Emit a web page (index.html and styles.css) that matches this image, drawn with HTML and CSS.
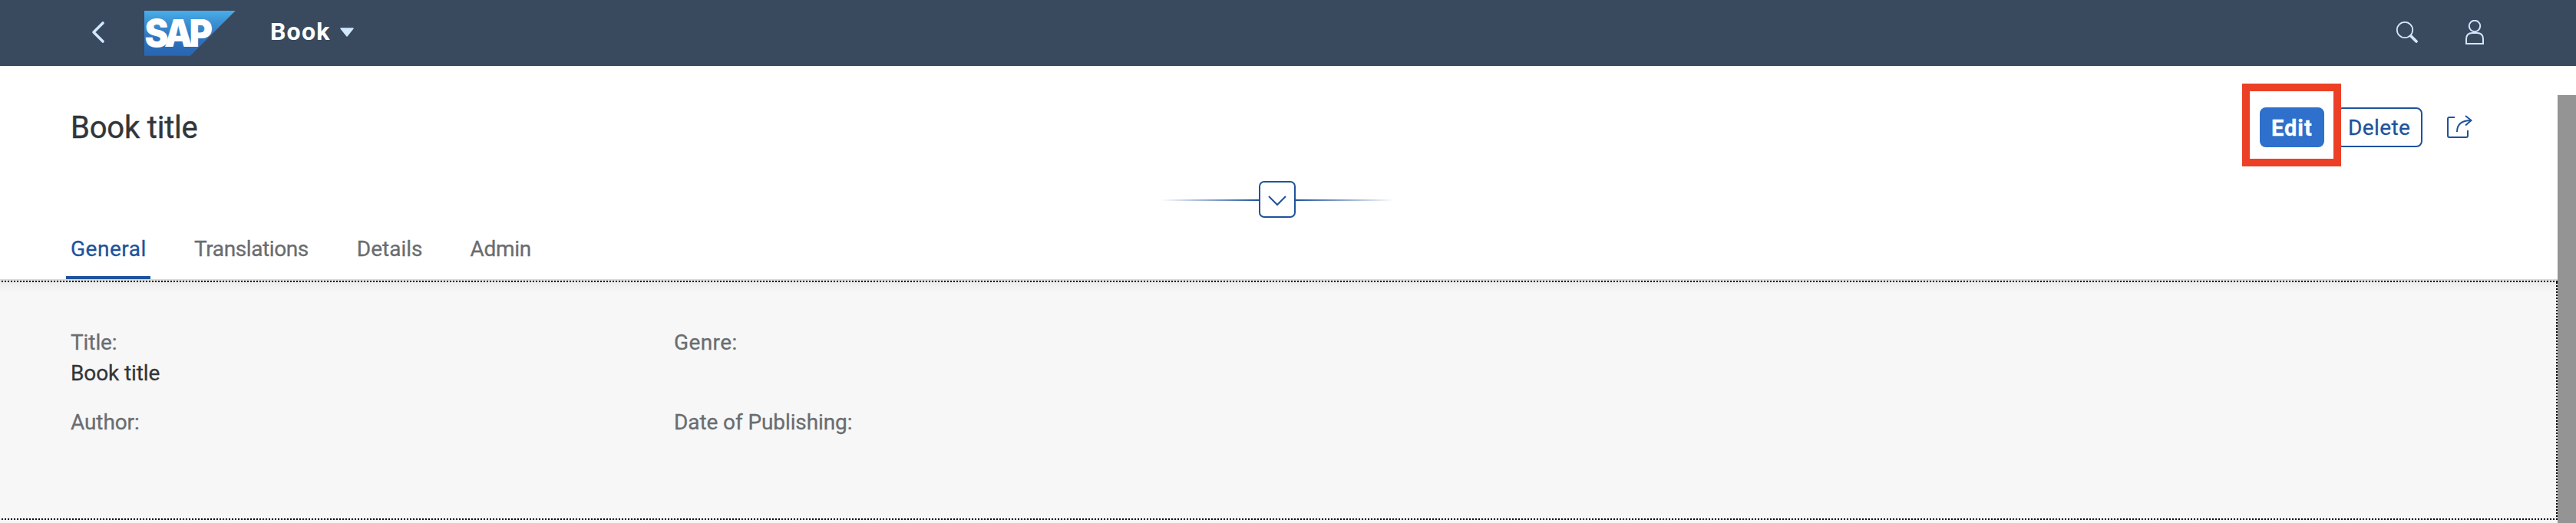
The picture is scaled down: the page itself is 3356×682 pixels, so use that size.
FILE: index.html
```html
<!DOCTYPE html>
<html lang="en">
<head>
<meta charset="utf-8">
<title>Book</title>
<link rel="stylesheet" href="styles.css">
</head>
<body>
<header class="shell">
  <svg class="back" width="18" height="30" viewBox="0 0 18 30"><path d="M15 3 3 15 15 27" fill="none" stroke="#d1e8ff" stroke-width="3.600" stroke-linecap="round" stroke-linejoin="round"/></svg>
  <svg class="logo" width="119" height="59" viewBox="0 0 119 59">
    <defs><linearGradient id="g" x1="0" y1="0" x2="0" y2="1"><stop offset="0" stop-color="#48aeea"/><stop offset=".25" stop-color="#3d92d3"/><stop offset=".6" stop-color="#2f74bf"/><stop offset="1" stop-color="#2865b0"/></linearGradient></defs>
    <path d="M0 0H118.700L60 58.700H0Z" fill="url(#g)"/>
    <text class="logo-text" transform="translate(.5 46.800) scale(.95 1)">SAP</text>
  </svg>
  <span class="app-title">Book</span>
  <svg class="caret" width="18" height="12" viewBox="0 0 18 12"><path d="M1 1H17L9 11Z" fill="#d1e8ff" stroke="#d1e8ff" stroke-width="1.500" stroke-linejoin="round"/></svg>
  <div class="tools">
    <svg width="30" height="32" viewBox="0 0 30 32" fill="none" stroke="#d1e8ff"><circle cx="12" cy="13" r="10.200" stroke-width="1.800"/><path d="M20 21 27 28" stroke-width="3.800" stroke-linecap="round"/></svg>
    <svg width="24" height="34" viewBox="0 0 24 34" fill="none" stroke="#d1e8ff" stroke-width="2"><circle cx="12" cy="8" r="7.200"/><path d="M1 31V25Q1 17 9 17H15Q23 17 23 25V31Z"/></svg>
  </div>
</header>
<div class="page">
  <main class="content">
    <div class="heading">
      <h1>Book title</h1>
      <div class="actions">
        <button class="btn primary">Edit<i class="highlight"></i></button>
        <button class="btn">Delete</button>
        <svg class="share" width="34" height="32" viewBox="0 0 34 32" fill="none" stroke="#1e539c" stroke-width="2"><path d="M11 3H4Q2 3 2 5V27Q2 29 4 29H26Q28 29 28 27V20"/><path d="M14 22C14 12 20 7 32 7M25 1 32.500 7 25 13.500"/></svg>
      </div>
    </div>
    <div class="expander"><i class="line left"></i><button class="expand"><svg width="24" height="14" viewBox="0 0 24 14"><path d="M1 1 12 12 23 1" fill="none" stroke="#1e539c" stroke-width="2"/></svg></button><i class="line right"></i></div>
    <nav class="tabs">
      <a class="active">General</a><a class="t-trans">Translations</a><a>Details</a><a class="t-admin">Admin</a>
    </nav>
    <section class="section">
      <div class="form">
        <div class="field"><label>Title:</label><p>Book title</p></div>
        <div class="field"><label class="t-genre">Genre:</label></div>
        <div class="field"><label>Author:</label></div>
        <div class="field"><label>Date of Publishing:</label></div>
      </div>
    </section>
  </main>
  <aside class="scrollbar"></aside>
</div>
</body>
</html>
```
FILE: styles.css
```css
* { box-sizing: border-box; }
body { margin: 0; width: 3356px; height: 682px; overflow: hidden; background: #fff; font-family: Roboto, "Noto Sans", sans-serif; font-size: 28px; line-height: 40px; color: #32363a; }
svg { display: block; flex: none; }
.shell { height: 86px; background: #39495e; display: flex; align-items: flex-start; padding-left: 119px; }
.back { margin-top: 27px; }
.logo { margin: 14px 0 0 51px; }
.logo-text { font: 900 49px Inter, sans-serif; letter-spacing: -4.500px; fill: #fff; }
.app-title { margin: 21px 0 0 45px; width: 81px; font-size: 32px; font-weight: 700; letter-spacing: 1.2px; color: #fff; white-space: nowrap; }
.caret { margin: 36px 0 0 10px; }
.tools { margin: 26px 120px 0 auto; display: flex; gap: 61px; }
.page { display: flex; height: 596px; }
.content { width: 3332px; background: #fff; }
.scrollbar { width: 24px; margin-top: 38px; background: #949494; }
.heading { height: 148px; padding: 54px 111px 0 92px; display: flex; justify-content: space-between; }
h1 { margin: 3px 0 0; font-size: 40px; line-height: 48px; font-weight: 400; letter-spacing: -.2px; -webkit-text-stroke: .4px currentColor; }
.actions { display: flex; align-items: flex-start; }
.btn { position: relative; height: 52px; margin: 0; padding: 0 0 0 13px; width: 112px; border: 2px solid #1e539c; border-radius: 8px; background: #fff; color: #1e539c; font: 400 28px/50px Roboto, sans-serif; letter-spacing: .4px; text-align: left; white-space: nowrap; -webkit-text-stroke: .3px currentColor; }
.primary { width: 84px; background: #2e70cb; border-color: #2e70cb; color: #fff; font-size: 29px; font-weight: 700; letter-spacing: 1px; margin-right: 16px; z-index: 1; }
.highlight { position: absolute; left: -25px; top: -33px; width: 129px; height: 108px; border: 10px solid #ec4026; }
.share { margin: 10px 0 0 31px; }
.expander { display: flex; align-items: center; height: 52px; padding-left: 1512px; }
.expand { width: 48px; height: 48px; padding: 4px 0 0; border: 2px solid #1e539c; border-radius: 7px; background: #fff; display: flex; align-items: center; justify-content: center; }
.line { width: 128px; height: 2px; margin-top: 2px; }
.left { background: linear-gradient(to left, #1e539c, #fff); }
.right { background: linear-gradient(to right, #1e539c, #fff); }
.tabs { display: flex; height: 80px; padding: 19px 0 0 86px; border-bottom: 2px solid #d9d9d9; color: #6a6d70; gap: 50px; -webkit-text-stroke: .3px currentColor; }
.tabs a { height: 59px; padding: 0 6px; border-radius: 4px 4px 0 0; white-space: nowrap; }
.tabs .active { color: #1e539c; width: 110px; margin-right: 1px; letter-spacing: .5px; background: linear-gradient(#1e539c, #1e539c) bottom / 100% 4px no-repeat; }
.tabs .t-trans { letter-spacing: -.4px; margin-right: 1px; }
.tabs .t-admin { letter-spacing: -.3px; }
.section {
  height: 316px;
  background:
    repeating-linear-gradient(to right, transparent 0 2px, #000 2px 4px) 0 0 / 100% 2px no-repeat,
    repeating-linear-gradient(to right, transparent 0 2px, #000 2px 4px) 0 310px / 100% 2px no-repeat,
    repeating-linear-gradient(to bottom, transparent 0 2px, #000 2px 4px) 100% 0 / 2px 312px no-repeat,
    linear-gradient(#ebebeb, #f7f7f7 16px);
}
.form { display: grid; grid-template-columns: 786px 400px; grid-auto-rows: 104px; padding: 61px 92px; -webkit-text-stroke: .3px currentColor; }
.field label { display: block; color: #6a6d70; white-space: nowrap; letter-spacing: -.1px; }
.field .t-genre { letter-spacing: .4px; }
.field p { margin: 0; letter-spacing: -.1px; }
```
